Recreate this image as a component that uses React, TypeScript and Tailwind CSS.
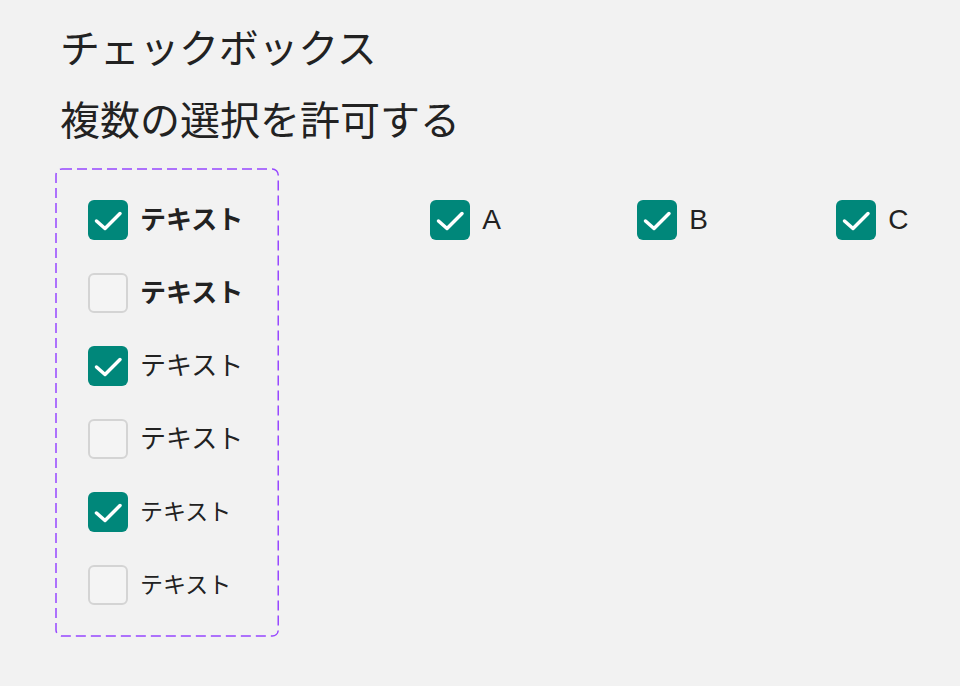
import React from 'react'

type Item = { label: string; checked: boolean; size: string }

const items: Item[] = [
  { label: 'テキスト', checked: true, size: 'text-[26px] font-bold' },
  { label: 'テキスト', checked: false, size: 'text-[26px] font-bold' },
  { label: 'テキスト', checked: true, size: 'text-[26px]' },
  { label: 'テキスト', checked: false, size: 'text-[26px]' },
  { label: 'テキスト', checked: true, size: 'text-[23px]' },
  { label: 'テキスト', checked: false, size: 'text-[23px]' },
]

function Box({ checked }: { checked: boolean }) {
  if (!checked) {
    return <span className="block w-10 h-10 shrink-0 rounded-[6px] border-2 border-[#d4d4d4] bg-[#f4f4f4]" />
  }
  return (
    <span className="flex w-10 h-10 shrink-0 rounded-[6px] bg-[#00877a]">
      <svg width="40" height="40" viewBox="0 0 40 40" fill="none">
        <polyline points="8.5,21 17,28.5 32,13.5" stroke="#fff" strokeWidth="3.5" strokeLinecap="round" strokeLinejoin="round" />
      </svg>
    </span>
  )
}

export default function App() {
  return (
    <div
      className="min-h-[686px] w-full bg-[#f2f2f2] text-[#222] px-[55px] pt-[13px]"
      style={{ fontFamily: '"Liberation Sans", "Noto Sans CJK JP", sans-serif' }}
    >
      <h1 className="pl-[5px] text-[40px] leading-[72px] font-normal whitespace-nowrap tracking-[-0.3px]">チェックボックス</h1>
      <p className="pl-[5px] text-[40px] leading-[72px] whitespace-nowrap">複数の選択を許可する</p>

      <div className="mt-[11px] flex items-start">
        {/* Vertical variants — dashed component frame */}
        <div className="relative flex flex-col gap-[33px] pt-[32px] pb-[32px] pl-[33px] pr-[36px]">
          <svg className="absolute inset-0 w-full h-full pointer-events-none overflow-visible" fill="none">
            <rect x="1" y="1" width="calc(100% - 2px)" height="calc(100% - 2px)" rx="6" stroke="#9747ff" strokeWidth="1.5" strokeDasharray="10 5" />
          </svg>
          {items.map((it, i) => (
            <div key={i} className="flex items-center gap-3 h-10">
              <Box checked={it.checked} />
              <span className={`${it.size} leading-none whitespace-nowrap`}>{it.label}</span>
            </div>
          ))}
        </div>

        {/* Horizontal group */}
        <div className="flex items-center mt-[32px] ml-[151px]">
          <div className="flex items-center gap-3 w-[207px]">
            <Box checked />
            <span className="text-[28px] leading-none">A</span>
          </div>
          <div className="flex items-center gap-3 w-[199px]">
            <Box checked />
            <span className="text-[28px] leading-none">B</span>
          </div>
          <div className="flex items-center gap-3">
            <Box checked />
            <span className="text-[28px] leading-none">C</span>
          </div>
        </div>
      </div>
    </div>
  )
}
